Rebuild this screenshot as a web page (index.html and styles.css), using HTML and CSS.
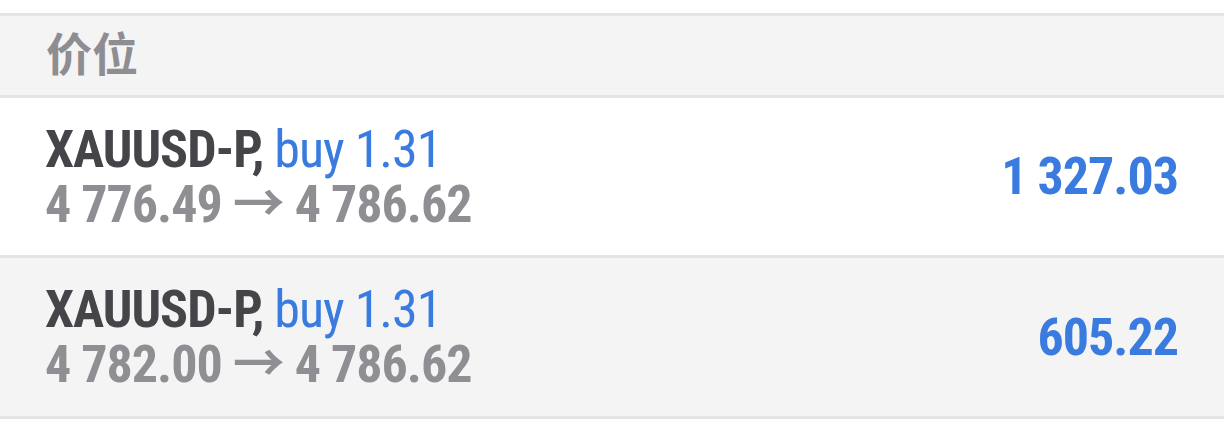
FILE: index.html
```html
<!DOCTYPE html>
<html lang="zh">
<head>
<meta charset="utf-8">
<title>价位</title>
<link rel="stylesheet" href="styles.css">
</head>
<body>
<div class="list">
  <div class="header"><span class="header-title">价位</span></div>
  <div class="row">
    <div class="info">
      <div class="line1"><span class="symbol">XAUUSD-P,</span> <span class="side">buy 1.31</span></div>
      <div class="line2">4 776.49 → 4 786.62</div>
    </div>
    <div class="profit">1 327.03</div>
  </div>
  <div class="row alt">
    <div class="info">
      <div class="line1"><span class="symbol">XAUUSD-P,</span> <span class="side">buy 1.31</span></div>
      <div class="line2">4 782.00 → 4 786.62</div>
    </div>
    <div class="profit">605.22</div>
  </div>
</div>
</body>
</html>
```
FILE: styles.css
```css
html, body {
  margin: 0;
  padding: 0;
  background: #ffffff;
}
body {
  padding-top: 13px;
  font-family: Roboto, "Noto Sans CJK SC", sans-serif;
}
.list {
  border-top: 3px solid #e4e4e4;
}
.header {
  height: 82px;
  background: #f4f4f4;
  border-bottom: 3px solid #e4e4e4;
  display: flex;
  align-items: center;
  padding-left: 46px;
  box-sizing: border-box;
}
.header-title {
  font-family: "Noto Sans CJK SC", sans-serif;
  font-weight: 700;
  font-size: 46px;
  color: #8e8e92;
  margin-top: -9px;
}
.row {
  height: 160px;
  box-sizing: border-box;
  border-bottom: 3px solid #e4e4e4;
  display: flex;
  align-items: center;
  justify-content: space-between;
  padding: 0 46px 0 45px;
  background: #ffffff;
}
.row.alt {
  height: 161px;
  background: #f4f4f4;
}
.info {
  font-size: 52px;
  line-height: 55px;
  font-stretch: 75%;
  letter-spacing: -1px;
}
.symbol {
  font-weight: 700;
  color: #454549;
}
.side {
  font-weight: 400;
  color: #3a7be0;
}
.line2 {
  font-weight: 700;
  color: #8f8f93;
}
.profit {
  font-size: 52px;
  font-weight: 700;
  font-stretch: 75%;
  letter-spacing: -1px;
  color: #3a7be0;
}
```
